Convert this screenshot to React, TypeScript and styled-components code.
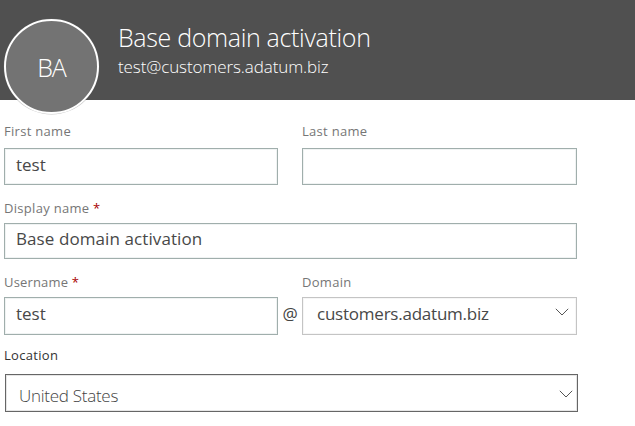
import React from "react";
import styled, { createGlobalStyle } from "styled-components";

const GlobalStyle = createGlobalStyle`
  *, *::before, *::after { box-sizing: border-box; }
  body { margin: 0; background: #fff; font-family: "Open Sans", "Noto Sans", sans-serif; }
`;

const Page = styled.main`
  width: 635px;
  height: 426px;
  overflow: hidden;
  background: #fff;
`;

const Header = styled.header`
  display: flex;
  align-items: flex-start;
  height: 100px;
  padding: 19px 0 0 4px;
  background: #505050;
`;

const Avatar = styled.div`
  flex: none;
  display: flex;
  align-items: center;
  justify-content: center;
  width: 95px;
  height: 95px;
  border: 2px solid #fff;
  border-radius: 50%;
  background: #737373;
  box-shadow: 0 0 0 0.5px rgba(115, 115, 115, 0.4);
  color: #fff;
  font-size: 25px;
  font-weight: 300;
  letter-spacing: -1px;
`;

const Identity = styled.div`
  display: flex;
  flex-direction: column;
  align-items: flex-start;
  margin-left: 19px;
  color: #fff;
  font-weight: 300;
  white-space: nowrap;
`;

const Title = styled.h1`
  margin: 0;
  font-size: 25px;
  font-weight: 300;
  line-height: 36px;
  letter-spacing: -0.33px;
`;

const Email = styled.span`
  font-size: 17px;
  line-height: 24px;
  letter-spacing: -0.1px;
`;

const Form = styled.form`
  display: flex;
  flex-direction: column;
  width: 578px;
  padding: 21px 0 0 4px;
`;

const Row = styled.div<{ $after: number }>`
  display: flex;
  margin-bottom: ${(p) => p.$after}px;
`;

const Field = styled.div<{ $width: number; $gap: number }>`
  display: flex;
  flex-direction: column;
  gap: ${(p) => p.$gap}px;
  width: ${(p) => p.$width}px;
`;

const Label = styled.label<{ $dark?: boolean; $spacing?: number }>`
  height: 20px;
  font-size: 13px;
  line-height: 20px;
  letter-spacing: ${(p) => p.$spacing ?? 0.3}px;
  white-space: nowrap;
  color: ${(p) => (p.$dark ? "#333" : "#767676")};
`;

const Required = styled.span`
  color: #a80000;
`;

const TextBox = styled.div<{ $height: number; $lift?: number; $spacing?: number }>`
  height: ${(p) => p.$height}px;
  padding: ${(p) => 4 - (p.$lift ?? 0)}px 11px 0;
  border: 1px solid #a0aeac;
  box-shadow: inset 0 0 0 1px #f0f3f3;
  color: #484848;
  font-size: 17px;
  line-height: 24px;
  letter-spacing: ${(p) => p.$spacing ?? 0}px;
  white-space: nowrap;
`;

const Select = styled.div<{ $strong?: boolean }>`
  display: flex;
  align-items: flex-start;
  justify-content: space-between;
  height: 38px;
  padding: ${(p) => (p.$strong ? "9px 4px 0 13px" : "4px 7px 0 14px")};
  margin-left: ${(p) => (p.$strong ? 1 : 0)}px;
  border: 1px solid ${(p) => (p.$strong ? "#666" : "#c4c4c4")};
  box-shadow: inset 0 0 0 1px ${(p) => (p.$strong ? "#e6e6e6" : "#f6f6f6")};
  color: ${(p) => (p.$strong ? "#444" : "#484848")};
  font-size: 17px;
  font-weight: ${(p) => (p.$strong ? 300 : 400)};
  line-height: 24px;
  letter-spacing: ${(p) => (p.$strong ? -0.27 : -0.23)}px;
  white-space: nowrap;
`;

const ChevronIcon = styled.svg<{ $top: number }>`
  flex: none;
  width: 14px;
  height: 8px;
  margin-top: ${(p) => p.$top}px;
`;

const AtSign = styled.span`
  align-self: flex-end;
  width: 24px;
  height: 38px;
  color: #444;
  font-size: 17px;
  line-height: 34px;
  text-align: center;
`;

const Spacer = styled.div`
  width: 24px;
`;

function Chevron({ top }: { top: number }) {
  return (
    <ChevronIcon $top={top} viewBox="0 0 14 8" aria-hidden="true">
      <path d="M0.8 0.8 L7 7 L13.2 0.8" fill="none" stroke="#555" strokeWidth="1" />
    </ChevronIcon>
  );
}

export default function App() {
  return (
    <>
      <GlobalStyle />
      <Page>
        <Header>
          <Avatar>BA</Avatar>
          <Identity>
            <Title>Base domain activation</Title>
            <Email>test@customers.adatum.biz</Email>
          </Identity>
        </Header>
        <Form>
          <Row $after={13}>
            <Field $width={274} $gap={7}>
              <Label>First name</Label>
              <TextBox $height={37}>test</TextBox>
            </Field>
            <Spacer />
            <Field $width={275} $gap={7}>
              <Label>Last name</Label>
              <TextBox $height={37} />
            </Field>
          </Row>
          <Row $after={13}>
            <Field $width={573} $gap={5}>
              <Label>
                Display name <Required>*</Required>
              </Label>
              <TextBox $height={36} $lift={1} $spacing={0.09}>
                Base domain activation
              </TextBox>
            </Field>
          </Row>
          <Row $after={10}>
            <Field $width={274} $gap={5}>
              <Label $spacing={0.16}>
                Username <Required>*</Required>
              </Label>
              <TextBox $height={38}>test</TextBox>
            </Field>
            <AtSign>@</AtSign>
            <Field $width={275} $gap={5}>
              <Label>Domain</Label>
              <Select>
                customers.adatum.biz
                <Chevron top={6} />
              </Select>
            </Field>
          </Row>
          <Row $after={0}>
            <Field $width={574} $gap={9}>
              <Label $dark>Location</Label>
              <Select $strong>
                United States
                <Chevron top={6} />
              </Select>
            </Field>
          </Row>
        </Form>
      </Page>
    </>
  );
}
